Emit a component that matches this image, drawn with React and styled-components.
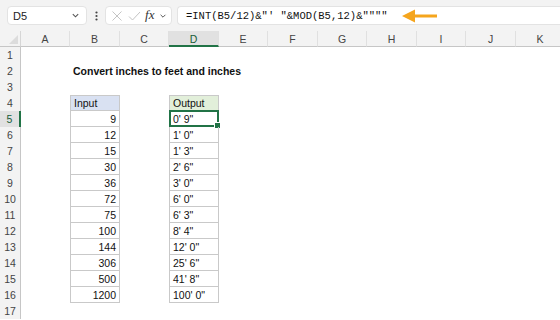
import React from 'react';
import styled, { createGlobalStyle } from 'styled-components';

const GlobalStyle = createGlobalStyle`
  html, body { margin: 0; padding: 0; background: #fff; }
  body { width: 560px; height: 320px; overflow: hidden; font-family: "Liberation Sans", Arial, sans-serif; }
`;

const inputs = [9, 12, 15, 30, 36, 72, 75, 100, 144, 306, 500, 1200];
const fmt = (n) => `${Math.floor(n / 12)}' ${n % 12}"`;
const columns = ['A', 'B', 'C', 'D', 'E', 'F', 'G', 'H', 'I', 'J', 'K'];
const widths = [49, 50, 49, 50, 49, 50, 49, 50, 49, 50, 49];

const Page = styled.div`
  width: 560px;
  height: 320px;
  overflow: hidden;
  display: flex;
  flex-direction: column;
`;

const Toolbar = styled.div`
  height: 31px;
  flex: none;
  background: #f3f3f3;
  display: flex;
  align-items: center;
  padding: 0 0 0 7px;
  gap: 0;
  box-sizing: border-box;
`;

const Box = styled.div`
  height: 19px;
  background: #fff;
  border: 1px solid #e3e3e3;
  border-radius: 4px;
  box-sizing: border-box;
  display: flex;
  align-items: center;
`;

const NameBox = styled(Box)`
  width: 80px;
  padding: 0 6px 0 5px;
  justify-content: space-between;
  font-size: 11px;
  color: #222;
`;

const Dots = styled.div`
  width: 18px;
  display: flex;
  justify-content: center;
`;

const FxBox = styled(Box)`
  width: 67px;
  padding: 0 4px 0 5px;
  justify-content: space-between;
`;

const Fx = styled.span`
  font-family: "Liberation Serif", "Times New Roman", serif;
  font-style: italic;
  font-size: 13px;
  color: #333;
  margin-top: -2px;
`;

const FormulaBox = styled(Box)`
  flex: 1;
  margin-left: 5px;
  border-right: none;
  border-radius: 4px 0 0 4px;
  padding-left: 8px;
  gap: 14px;
`;

const Formula = styled.span`
  font-family: "Liberation Mono", "Courier New", monospace;
  font-size: 10.5px;
  color: #111;
  white-space: pre;
`;

const Sheet = styled.div`
  display: grid;
  grid-template-columns: 21px ${widths.map((w) => `${w}px`).join(' ')};
  grid-template-rows: 16px;
  grid-auto-rows: 16px;
  flex: 1;
`;

const Corner = styled.div`
  background: #f3f3f3;
  border-right: 1px solid #d6d6d6;
  border-bottom: 1px solid #c6c6c6;
  box-sizing: border-box;
  position: relative;
  &::after {
    content: '';
    position: absolute;
    right: 2px;
    bottom: 2px;
    border-style: solid;
    border-width: 0 0 9px 9px;
    border-color: transparent transparent #dcdcdc transparent;
  }
`;

const ColHead = styled.div`
  background: ${(p) => (p.$active ? '#e1e1e1' : '#f3f3f3')};
  border-right: 1px solid #e0e0e0;
  border-bottom: ${(p) => (p.$active ? '2px solid #217346' : '1px solid #c6c6c6')};
  box-sizing: border-box;
  display: flex;
  align-items: center;
  justify-content: center;
  font-size: 10.5px;
  color: ${(p) => (p.$active ? '#185c37' : '#444')};
  padding-top: ${(p) => (p.$active ? '1px' : '0')};
`;

const RowHead = styled.div`
  background: ${(p) => (p.$active ? '#e1e1e1' : '#f3f3f3')};
  border-right: ${(p) => (p.$active ? '2px solid #217346' : '1px solid #c6c6c6')};
  box-sizing: border-box;
  display: flex;
  align-items: center;
  justify-content: center;
  font-size: 10.5px;
  color: ${(p) => (p.$active ? '#185c37' : '#444')};
`;

const Cell = styled.div`
  box-sizing: border-box;
  font-size: 10.5px;
  color: #111;
  display: flex;
  align-items: center;
  white-space: nowrap;
  padding: 0 3px;
  justify-content: ${(p) => (p.$right ? 'flex-end' : 'flex-start')};
  font-weight: ${(p) => (p.$bold ? 700 : 400)};
  background: ${(p) => p.$fill || 'transparent'};
  overflow: visible;
  position: relative;
  ${(p) =>
    p.$boxed &&
    `
    border-right: 1px solid #c9c9c9;
    border-bottom: 1px solid #c9c9c9;
    border-left: 1px solid #c9c9c9;
  `}
  ${(p) => p.$top && 'border-top: 1px solid #c9c9c9;'}
`;

const Selection = styled.div`
  position: absolute;
  left: -1px;
  top: -1px;
  right: -1px;
  bottom: -1px;
  border: 2px solid #217346;
  pointer-events: none;
  &::after {
    content: '';
    position: absolute;
    right: -4px;
    bottom: -4px;
    width: 5px;
    height: 5px;
    background: #217346;
    border: 1px solid #fff;
  }
`;

const Chevron = ({ size = 9 }) => (
  <svg width={size} height={size} viewBox="0 0 10 10" fill="none" stroke="#555" strokeWidth="1.2">
    <path d="M2 3.5 L5 6.5 L8 3.5" />
  </svg>
);

const Arrow = () => (
  <svg width="36" height="14" viewBox="0 0 36 14">
    <path d="M12 5.5 H35 V8.5 H12 Z" fill="#f5a51d" />
    <path d="M0 7 L13 0.5 L13 13.5 Z" fill="#f5a51d" />
  </svg>
);

function cellContent(row, col) {
  if (row === 2 && col === 'B') return { text: 'Convert inches to feet and inches', bold: true };
  if (row === 4 && col === 'B') return { text: 'Input', fill: '#d9e1f2', boxed: true, top: true };
  if (row === 4 && col === 'D') return { text: 'Output', fill: '#e2efda', boxed: true, top: true };
  if (row >= 5 && row <= 16) {
    const n = inputs[row - 5];
    if (col === 'B') return { text: String(n), right: true, boxed: true };
    if (col === 'D') return { text: fmt(n), boxed: true, selected: row === 5 };
  }
  return null;
}

export default function App() {
  const rows = Array.from({ length: 17 }, (_, i) => i + 1);
  return (
    <Page>
      <GlobalStyle />
      <Toolbar>
        <NameBox>
          <span>D5</span>
          <Chevron />
        </NameBox>
        <Dots>
          <svg width="3" height="10" viewBox="0 0 3 10" fill="#444">
            <circle cx="1.5" cy="1.5" r="1.1" />
            <circle cx="1.5" cy="5" r="1.1" />
            <circle cx="1.5" cy="8.5" r="1.1" />
          </svg>
        </Dots>
        <FxBox>
          <svg width="12" height="12" viewBox="0 0 12 12" stroke="#c4c4c4" strokeWidth="1">
            <path d="M1.5 1.5 L10.5 10.5 M10.5 1.5 L1.5 10.5" />
          </svg>
          <svg width="13" height="12" viewBox="0 0 13 12" fill="none" stroke="#c4c4c4" strokeWidth="1">
            <path d="M1 6.5 L4.5 10 L12 2" />
          </svg>
          <Fx>fx</Fx>
          <Chevron size={8} />
        </FxBox>
        <FormulaBox>
          <Formula>{`=INT(B5/12)&"' "&MOD(B5,12)&""""`}</Formula>
          <Arrow />
        </FormulaBox>
      </Toolbar>
      <Sheet>
        <Corner />
        {columns.map((c) => (
          <ColHead key={c} $active={c === 'D'}>{c}</ColHead>
        ))}
        {rows.map((r) => (
          <React.Fragment key={r}>
            <RowHead $active={r === 5}>{r}</RowHead>
            {columns.map((c) => {
              const d = cellContent(r, c);
              if (!d) return <Cell key={c} />;
              return (
                <Cell
                  key={c}
                  $bold={d.bold}
                  $right={d.right}
                  $fill={d.fill}
                  $boxed={d.boxed}
                  $top={d.top}
                >
                  {d.text}
                  {d.selected && <Selection />}
                </Cell>
              );
            })}
          </React.Fragment>
        ))}
      </Sheet>
    </Page>
  );
}
